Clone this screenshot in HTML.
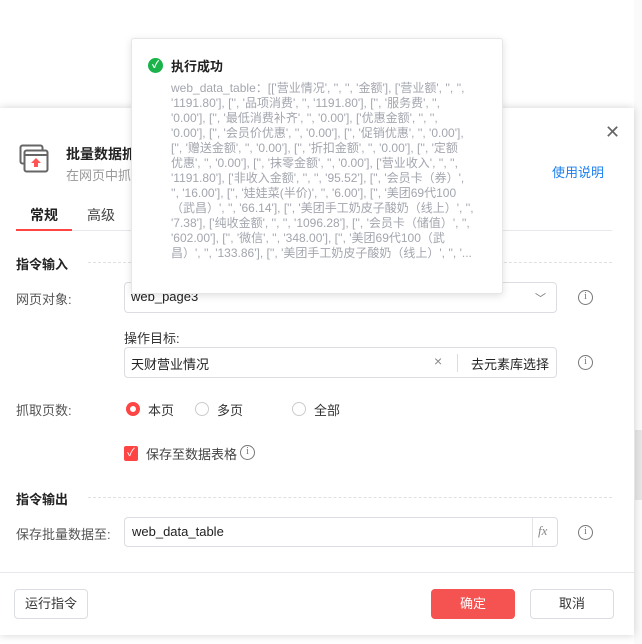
<!DOCTYPE html>
<html><head><meta charset="utf-8"><style>
*{box-sizing:border-box;margin:0;padding:0}
body{width:642px;height:644px;background:#fff;position:relative;overflow:hidden;font-family:"Liberation Sans","Noto Sans CJK SC",sans-serif;font-size:13px;color:#333}
.a{position:absolute}
.dlg{left:0;top:108px;width:634px;height:527px;background:#fff;box-shadow:0 0 8px rgba(0,0,0,.18)}
.lbl{color:#555;font-size:13px}
.inp{border:1px solid #dcdde2;border-radius:4px;background:#fff}
.info{width:15px;height:15px;border:1.3px solid #777;border-radius:50%;font-size:10px;line-height:12px;text-align:center;color:#777;font-family:"Liberation Serif",serif}
.radio{width:14px;height:14px;border:1px solid #ccc;border-radius:50%}
.btn{border:1px solid #dcdde2;border-radius:4px;text-align:center;line-height:28px;font-size:13px;color:#333;background:#fff}
.toast{left:131px;top:38px;width:372px;height:256px;background:#fff;border:1px solid #e6e6e6;border-radius:3px;box-shadow:0 2px 8px rgba(0,0,0,.12)}
.tx{left:39px;top:42px;font-size:12px;line-height:15px;color:#a3a6ae;white-space:nowrap}
</style></head><body>
<div class="a" style="left:634px;top:0;width:8px;height:644px;background:#fafafa"></div>
<div class="a" style="left:635px;top:430px;width:7px;height:70px;background:#e6e6e6"></div>
<div class="a dlg">
 <div class="a" style="left:605px;top:14px;font-size:18px;color:#666">✕</div>
 <svg class="a" style="left:19px;top:36px" width="30" height="30" viewBox="0 0 30 30"><rect x="1.5" y="1.5" width="22" height="18" rx="2" fill="none" stroke="#666" stroke-width="2"/><rect x="5.5" y="6.5" width="23" height="21" rx="2" fill="#fff" stroke="#666" stroke-width="2"/><line x1="6" y1="11" x2="28" y2="11" stroke="#666" stroke-width="2"/><path d="M17 14l-5 5h3v4h4v-4h3z" fill="#f55"/></svg>
 <div class="a" style="left:66px;top:36px;font-size:14px;font-weight:bold;color:#222">批量数据抓取</div>
 <div class="a" style="left:66px;top:57px;font-size:13px;color:#999">在网页中抓取</div>
 <div class="a" style="left:552px;top:54px;font-size:13px;color:#1a7ff0">使用说明</div>
 <div class="a" style="left:30px;top:97px;font-size:14px;color:#222;font-weight:bold">常规</div>
 <div class="a" style="left:87px;top:97px;font-size:14px;color:#444">高级</div>
 <div class="a" style="left:16px;top:122px;width:596px;height:1px;background:#e8e8ec"></div>
 <div class="a" style="left:16px;top:121px;width:56px;height:2px;background:#f44"></div>
 <div class="a" style="left:16px;top:146px;font-size:13px;font-weight:bold;color:#222">指令输入</div>
 <div class="a" style="left:88px;top:154px;width:524px;border-top:1px dashed #e0e0e0"></div>
 <div class="a lbl" style="left:16px;top:181px">网页对象:</div>
 <div class="a inp" style="left:124px;top:174px;width:433px;height:31px"><span class="a" style="left:6px;top:6px;font-size:13px;color:#222">web_page3</span><span class="a" style="right:10px;top:7px;font-size:11px;color:#777">﹀</span></div>
 <div class="a info" style="left:578px;top:182px">i</div>
 <div class="a lbl" style="left:124px;top:220px;color:#333">操作目标:</div>
 <div class="a inp" style="left:124px;top:239px;width:433px;height:31px"><span class="a" style="left:6px;top:6px;font-size:13px;color:#222">天财营业情况</span><span class="a" style="left:309px;top:5px;font-size:14px;color:#888">×</span><span class="a" style="left:332px;top:6px;width:1px;height:18px;background:#ddd"></span><span class="a" style="left:346px;top:6px;font-size:13px;color:#222">去元素库选择</span></div>
 <div class="a info" style="left:578px;top:247px">i</div>
 <div class="a lbl" style="left:16px;top:292px">抓取页数:</div>
 <div class="a radio" style="left:126px;top:294px;border:4px solid #f44"></div><div class="a" style="left:148px;top:292px">本页</div>
 <div class="a radio" style="left:195px;top:294px"></div><div class="a" style="left:217px;top:292px">多页</div>
 <div class="a radio" style="left:292px;top:294px"></div><div class="a" style="left:314px;top:292px">全部</div>
 <div class="a" style="left:124px;top:338px;width:14px;height:15px;background:#f44;border-radius:2px;color:#fff;font-size:11px;text-align:center;line-height:15px">✓</div>
 <div class="a" style="left:146px;top:336px;color:#444">保存至数据表格</div>
 <div class="a info" style="left:240px;top:337px">i</div>
 <div class="a" style="left:16px;top:381px;font-weight:bold;color:#222">指令输出</div>
 <div class="a" style="left:88px;top:389px;width:524px;border-top:1px dashed #e0e0e0"></div>
 <div class="a lbl" style="left:16px;top:416px">保存批量数据至:</div>
 <div class="a inp" style="left:124px;top:409px;width:434px;height:30px"><span class="a" style="left:7px;top:6px;color:#222">web_data_table</span><span class="a" style="left:407px;top:0;width:1px;height:28px;background:#e4e4e4"></span><span class="a" style="left:413px;top:5px;color:#888;font-style:italic;font-family:'Liberation Serif',serif">fx</span></div>
 <div class="a info" style="left:578px;top:417px">i</div>
 <div class="a" style="left:0;top:464px;width:634px;height:1px;background:#e8e8ec"></div>
 <div class="a btn" style="left:14px;top:481px;width:74px;height:30px">运行指令</div>
 <div class="a btn" style="left:431px;top:481px;width:84px;height:30px;background:#f55252;border-color:#f55252;color:#fff">确定</div>
 <div class="a btn" style="left:530px;top:481px;width:84px;height:30px">取消</div>
</div>
<div class="a toast">
 <div class="a" style="left:16px;top:19px;width:15px;height:15px;border-radius:50%;background:#1ab34a;color:#fff;font-size:10px;line-height:15px;text-align:center;font-weight:bold">✓</div>
 <div class="a" style="left:39px;top:17px;font-size:13px;font-weight:bold;color:#222">执行成功</div>
 <div class="a tx">web_data_table：[['营业情况', '', '', '金额'], ['营业额', '', '',<br>'1191.80'], ['', '品项消费', '', '1191.80'], ['', '服务费', '',<br>'0.00'], ['', '最低消费补齐', '', '0.00'], ['优惠金额', '', '',<br>'0.00'], ['', '会员价优惠', '', '0.00'], ['', '促销优惠', '', '0.00'],<br>['', '赠送金额', '', '0.00'], ['', '折扣金额', '', '0.00'], ['', '定额<br>优惠', '', '0.00'], ['', '抹零金额', '', '0.00'], ['营业收入', '', '',<br>'1191.80'], ['非收入金额', '', '', '95.52'], ['', '会员卡（券）',<br>'', '16.00'], ['', '娃娃菜(半价)', '', '6.00'], ['', '美团69代100<br>（武昌）', '', '66.14'], ['', '美团手工奶皮子酸奶（线上）', '',<br>'7.38'], ['纯收金额', '', '', '1096.28'], ['', '会员卡（储值）', '',<br>'602.00'], ['', '微信', '', '348.00'], ['', '美团69代100（武<br>昌）', '', '133.86'], ['', '美团手工奶皮子酸奶（线上）', '', '...</div>
</div>
</body></html>
